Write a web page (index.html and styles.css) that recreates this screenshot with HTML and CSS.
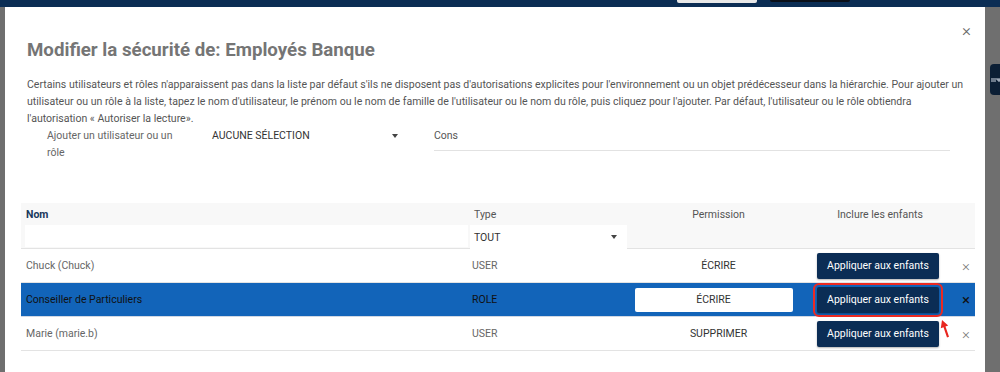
FILE: index.html
```html
<!DOCTYPE html>
<html lang="fr">
<head>
<meta charset="utf-8">
<link rel="stylesheet" href="styles.css">
</head>
<body>
<div class="page">
  <div class="topbar">
    <span class="tb-btn tb-light"></span>
    <span class="tb-btn tb-dark"></span>
  </div>
  <div class="side-tab"><svg width="10" height="10" viewBox="0 0 10 10"><path d="M0 4h7M0 6h5M8 3v4M6 5h4" stroke="#cfd8e3" stroke-width="1" fill="none"/></svg></div>
</div>

<div class="modal">
  <div class="modal-head">
    <h1 class="title">Modifier la sécurité de: Employés Banque</h1>
    <span class="close">×</span>
  </div>
  <p class="desc">Certains utilisateurs et rôles n'apparaissent pas dans la liste par défaut s'ils ne disposent pas d'autorisations explicites pour l'environnement ou un objet prédécesseur dans la hiérarchie. Pour ajouter un utilisateur ou un rôle à la liste, tapez le nom d'utilisateur, le prénom ou le nom de famille de l'utilisateur ou le nom du rôle, puis cliquez pour l'ajouter. Par défaut, l'utilisateur ou le rôle obtiendra l'autorisation « Autoriser la lecture».</p>

  <div class="add-row">
    <div class="add-label">Ajouter un utilisateur ou un rôle</div>
    <div class="add-select"><span>AUCUNE SÉLECTION</span><span class="caret"></span></div>
    <div class="add-input">Cons</div>
  </div>

  <div class="table">
    <div class="thead">
      <div class="c-nom">
        <div class="th-label th-strong">Nom</div>
        <div class="filter-input"></div>
      </div>
      <div class="c-type">
        <div class="th-label th-type">Type</div>
        <div class="filter-select"><span>TOUT</span><span class="caret"></span></div>
      </div>
      <div class="c-perm th-center"><div class="th-label">Permission</div></div>
      <div class="c-inc th-center"><div class="th-label">Inclure les enfants</div></div>
      <div class="c-x"></div>
    </div>

    <div class="row">
      <div class="c-nom">Chuck (Chuck)</div>
      <div class="c-type">USER</div>
      <div class="c-perm cell-center">ÉCRIRE</div>
      <div class="c-inc cell-center"><span class="btn">Appliquer aux enfants</span></div>
      <div class="c-x">×</div>
    </div>
    <div class="row row-sel">
      <div class="c-nom">Conseiller de Particuliers</div>
      <div class="c-type">ROLE</div>
      <div class="c-perm cell-center"><span class="perm-box">ÉCRIRE</span></div>
      <div class="c-inc cell-center"><span class="btn btn-marked">Appliquer aux enfants</span></div>
      <div class="c-x">×</div>
    </div>
    <div class="row">
      <div class="c-nom">Marie (marie.b)</div>
      <div class="c-type">USER</div>
      <div class="c-perm cell-center">SUPPRIMER</div>
      <div class="c-inc cell-center"><span class="btn">Appliquer aux enfants</span></div>
      <div class="c-x">×</div>
    </div>
  </div>

  <svg class="arrow" width="13" height="21" viewBox="0 0 13 21"><path d="M2 1 L8.2 6.6 L5.5 7.5 L9 17.7 L7 18.4 L3.5 8.2 L0.8 9.2 Z" fill="#e8261f"/></svg>
</div>
</body>
</html>
```

FILE: styles.css
```css
* { box-sizing: border-box; }
html, body { margin: 0; padding: 0; }
body {
  width: 1000px;
  height: 372px;
  overflow: hidden;
  background: #6f6f6f;
  font-family: Roboto, "Noto Sans", sans-serif;
  position: relative;
}
.page { height: 372px; }
.topbar {
  height: 7px;
  background: #0b2d54;
  display: flex;
  padding-left: 677px;
  gap: 13px;
  align-items: flex-start;
}
.tb-btn { display: block; height: 3px; }
.tb-light { width: 80px; background: #e8e8e8; border-radius: 0 0 2px 2px; }
.tb-dark { width: 80px; background: #0a0f18; border-radius: 0 0 6px 6px; height: 2px; }
.side-tab {
  position: absolute;
  left: 990px;
  top: 64px;
  width: 12px;
  height: 31px;
  background: #0c1f35;
  border-radius: 4px 0 0 4px;
  display: flex;
  align-items: center;
  justify-content: center;
}

.modal {
  position: absolute;
  left: 5px;
  top: 7px;
  width: 980px;
  height: 372px;
  background: #fff;
  padding: 24px 10px 0 16px;
}
.modal-head {
  display: flex;
  justify-content: space-between;
  align-items: flex-start;
  padding-left: 6px;
}
.title {
  margin: 8px 0 0 0;
  font-size: 18.7px;
  font-weight: 700;
  color: #757575;
  line-height: 22px;
}
.close {
  font-size: 17px;
  font-weight: 300;
  color: #666;
  line-height: 14px;
  margin-right: 4px;
  margin-top: -8px;
}
.desc {
  margin: 15px 0 0 6px;
  font-size: 10.55px;
  line-height: 17px;
  color: #555;
  width: 942px;
}
.add-row {
  display: flex;
  align-items: flex-start;
  margin-top: 0;
  padding-left: 26px;
}
.add-label {
  width: 140px;
  font-size: 10.5px;
  line-height: 17px;
  color: #666;
}
.add-select {
  width: 190px;
  margin-left: 25px;
  display: flex;
  justify-content: space-between;
  align-items: center;
  font-size: 10.5px;
  color: #333;
  line-height: 17px;
  padding-right: 4px;
}
.caret {
  width: 0; height: 0;
  border-left: 3.5px solid transparent;
  border-right: 3.5px solid transparent;
  border-top: 4px solid #444;
}
.add-input {
  margin-left: 32px;
  width: 516px;
  font-size: 10.5px;
  color: #555;
  line-height: 17px;
  padding-bottom: 6px;
  border-bottom: 1px solid #e2e2e2;
}

.table {
  margin-top: 42px;
  width: 954px;
}
.thead {
  display: flex;
  background: #f8f8f8;
  height: 46px;
  padding-top: 4px;
  border-bottom: 1px solid #e3e3e3;
}
.th-label {
  font-size: 10.5px;
  color: #555;
  line-height: 15px;
  height: 15px;
}
.th-type { padding-left: 2px; }
.th-strong { font-weight: 700; color: #18385c; }
.th-center { text-align: center; }
.filter-input {
  margin-top: 3px;
  height: 22px;
  width: 443px;
  background: #fff;
  margin-left: -1px;
}
.filter-select {
  margin-top: 3px;
  height: 24px;
  width: 157px;
  background: #fff;
  display: flex;
  align-items: center;
  justify-content: space-between;
  padding: 0 10px 0 4px;
  margin-left: -2px;
  font-size: 10.5px;
  color: #333;
}
.c-nom { width: 451px; padding-left: 5px; }
.c-type { width: 160px; padding-left: 0; }
.c-perm { width: 173px; }
.c-inc { width: 150px; }
.c-x { width: 20px; }

.row {
  display: flex;
  align-items: center;
  height: 34px;
  border-bottom: 1px solid #e3e3e3;
  font-size: 10.5px;
  color: #666;
}
.row .c-x { font-size: 15px; font-weight: 300; color: #777; padding-left: 7px; }
.cell-center { display: flex; justify-content: center; color: #333; }
.row-sel {
  background: #1264b9;
  color: #111;
  border-bottom-color: #d0d8e4;
}
.row-sel .c-x { color: #111; font-weight: 400; }
.perm-box {
  display: flex;
  align-items: center;
  justify-content: center;
  width: 158px;
  height: 24px;
  background: #fff;
  border-radius: 2px;
  color: #333;
  margin-left: -10px;
}
.btn {
  display: inline-flex;
  align-items: center;
  justify-content: center;
  width: 122px;
  height: 26px;
  background: #0b2d55;
  color: #fff;
  font-size: 10.5px;
  border-radius: 2px;
  box-shadow: 0 1px 2px rgba(0,0,0,0.3);
  margin-left: -4px;
}
.btn-marked { outline: 2px solid #ec2a22; outline-offset: 2px; }
.arrow {
  position: absolute;
  left: 935px;
  top: 312px;
}
```
